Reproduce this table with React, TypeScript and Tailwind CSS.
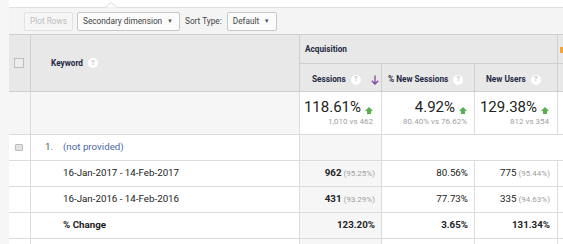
import React from "react";

const Help = () => (
  <span className="ml-[5px] flex h-[10px] w-[10px] items-center justify-center rounded-full bg-white text-[7px] font-bold leading-none text-[#c4c4c4]">
    ?
  </span>
);

const UpArrow = () => (
  <svg width="8" height="7" viewBox="0 0 8 7" className="ml-[4px] mb-[2px]">
    <polygon points="4,0 8,4 6,4 6,7 2,7 2,4 0,4" fill="#56b04f" />
  </svg>
);

const SortArrow = () => (
  <svg width="8" height="10" viewBox="0 0 8 10" className="ml-auto">
    <path d="M4 0.5 V9 M0.8 5.8 L4 9 L7.2 5.8" stroke="#7d4a9c" strokeWidth="1.3" fill="none" />
  </svg>
);

const Caret = () => <span className="text-[6px] leading-none text-[#555]">▼</span>;

const head = "bg-[#e8e8e8] border-r border-b border-[#cfcfcf]";
const line = "border-r border-b border-[#dcdcdc]";

type Row = {
  label: string;
  bold?: boolean;
  sessions: string;
  sessionsPct?: string;
  newPct: string;
  users: string;
  usersPct?: string;
};

const rows: Row[] = [
  { label: "16-Jan-2017 - 14-Feb-2017", sessions: "962", sessionsPct: "(95.25%)", newPct: "80.56%", users: "775", usersPct: "(95.44%)" },
  { label: "16-Jan-2016 - 14-Feb-2016", sessions: "431", sessionsPct: "(93.29%)", newPct: "77.73%", users: "335", usersPct: "(94.63%)" },
  { label: "% Change", bold: true, sessions: "123.20%", newPct: "3.65%", users: "131.34%" },
  { label: "", sessions: "", newPct: "", users: "" },
];

const Summary = ({ big, small, pr }: { big: string; small: string; pr: string }) => (
  <div className={`${line} bg-white flex flex-col items-end pt-[7px] ${pr}`}>
    <div className="flex items-end text-[15px] leading-[17px] text-[#222]">
      {big}
      <UpArrow />
    </div>
    <div className="mt-[1px] text-[8px] leading-[10px] text-[#a0a0a0]">{small}</div>
  </div>
);

export default function App() {
  return (
    <div className="flex h-[244px] w-[563px] overflow-hidden bg-white font-['Roboto','Liberation_Sans',sans-serif] text-[#222]">
      <div className="w-[9px] shrink-0 bg-[#f6f6f6]" />
      <div className="flex min-w-0 flex-1 flex-col">
        <div className="relative h-[7px] shrink-0">
          <svg width="12" height="6" viewBox="0 0 12 6" className="absolute left-[96px] top-[2px]">
            <polyline points="0,5.5 6,0.5 12,5.5" stroke="#dadada" fill="white" />
          </svg>
        </div>
        <div className="flex h-[28px] shrink-0 items-center border-t border-b border-t-[#e0e0e0] border-b-[#cfcfcf] bg-[#f4f4f4] pl-[15px] text-[8.25px]">
          <div className="flex h-[19px] w-[49px] items-center justify-center rounded-[2px] border border-[#e2e2e2] bg-[#f6f6f6] text-[#bcbcbc]">
            Plot Rows
          </div>
          <div className="ml-[4px] flex h-[19px] w-[103px] items-center justify-between rounded-[2px] border border-[#c8c8c8] bg-[#fbfbfb] pl-[5px] pr-[6px] text-[#444]">
            Secondary dimension
            <Caret />
          </div>
          <span className="ml-[5px] text-[#444]">Sort Type:</span>
          <div className="ml-[5px] flex h-[19px] w-[50px] items-center justify-between rounded-[2px] border border-[#c8c8c8] bg-[#fbfbfb] pl-[5px] pr-[6px] text-[#444]">
            Default
            <Caret />
          </div>
        </div>

        <div className="grid shrink-0 grid-cols-[22px_269px_82px_93px_83px_1fr] grid-rows-[29px_28px_43px_26px_26px_26px_26px_26px] text-[8.25px]">
          {/* header */}
          <div className={`${head} row-span-2 flex items-center justify-center pr-[1px]`}>
            <div className="h-[10px] w-[10px] border border-[#bdbdbd] bg-[#ececec]" />
          </div>
          <div className={`${head} row-span-2 flex items-center pl-[20px] font-bold text-[#1f2a44]`}>
            Keyword
            <Help />
          </div>
          <div className={`${head} col-span-3 flex items-center pl-[5px] font-bold text-[#1f2a44]`}>Acquisition</div>
          <div className="relative border-b border-[#cfcfcf] bg-[#e8e8e8]">
            <div className="absolute left-[2px] top-[12px] h-[6px] w-[4px] bg-[#f2a531]" />
          </div>
          <div className={`${head} flex items-center pl-[12px] pr-[2px] pt-[4px] font-bold text-[#1f2a44]`}>
            Sessions
            <Help />
            <SortArrow />
          </div>
          <div className={`${head} flex items-center pl-[6px] pt-[4px] font-bold text-[#1f2a44]`}>
            % New Sessions
            <Help />
          </div>
          <div className={`${head} flex items-center pl-[11px] pt-[4px] font-bold text-[#1f2a44]`}>
            New Users
            <Help />
          </div>
          <div className="border-b border-[#cfcfcf] bg-[#e8e8e8]" />

          {/* summary */}
          <div className={`${line} bg-[#f6f6f6]`} />
          <div className={`${line} bg-[#f6f6f6]`} />
          <Summary big="118.61%" small="1,010 vs 462" pr="pr-[8px]" />
          <Summary big="4.92%" small="80.40% vs 76.62%" pr="pr-[7px]" />
          <Summary big="129.38%" small="812 vs 354" pr="pr-[8px]" />
          <div className="border-b border-[#dcdcdc] bg-white" />

          {/* row 1 */}
          <div className={`${line} flex items-center justify-center pr-[1px]`}>
            <div className="h-[7px] w-[8px] rounded-[1px] border border-[#bdbdbd] bg-[#e2e2e2]" />
          </div>
          <div className={`${line} flex items-center text-[9.75px]`}>
            <span className="ml-[14px] w-[18px] text-[#555]">1.</span>
            <span className="text-[#4a68a6]">(not provided)</span>
          </div>
          <div className={`${line} bg-[#f6f6f6]`} />
          <div className="col-span-3 border-b border-[#dcdcdc] bg-white" />

          {rows.map((r, i) => (
            <React.Fragment key={i}>
              <div className={line} />
              <div className={`${line} flex items-center pl-[32px] text-[9.75px] ${r.bold ? "font-bold" : ""}`}>
                {r.label}
              </div>
              <div className={`${line} flex items-center justify-end bg-[#f6f6f6] pr-[6px] text-[9.75px] font-bold`}>
                {r.sessions}
                {r.sessionsPct && <span className="ml-[2px] text-[8px] font-normal text-[#a0a0a0]">{r.sessionsPct}</span>}
              </div>
              <div className={`${line} flex items-center justify-end pr-[6px] text-[9.75px] ${r.bold ? "font-bold" : ""}`}>
                {r.newPct}
              </div>
              <div className={`${line} flex items-center justify-end pr-[7px] text-[9.75px] ${r.bold ? "font-bold" : ""}`}>
                {r.users}
                {r.usersPct && <span className="ml-[2px] text-[8px] text-[#a0a0a0]">{r.usersPct}</span>}
              </div>
              <div className="border-b border-[#dcdcdc]" />
            </React.Fragment>
          ))}
        </div>
      </div>
    </div>
  );
}
